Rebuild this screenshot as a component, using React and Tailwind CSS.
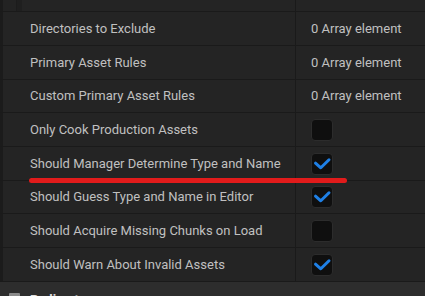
import React from "react";

const rows = [
  { label: "Directories to Exclude", value: "0 Array element", h: "h-[33px]" },
  { label: "Primary Asset Rules", value: "0 Array element", h: "h-[33px]" },
  { label: "Custom Primary Asset Rules", value: "0 Array element", h: "h-[32px]" },
  { label: "Only Cook Production Assets", check: false, h: "h-[33px]" },
  { label: "Should Manager Determine Type and Name", check: true, h: "h-[33px]" },
  { label: "Should Guess Type and Name in Editor", check: true, h: "h-[32px]" },
  { label: "Should Acquire Missing Chunks on Load", check: false, h: "h-[33px]" },
  { label: "Should Warn About Invalid Assets", check: true, h: "h-[33px]" },
];

function Checkbox({ checked }) {
  return (
    <div className="w-[22px] h-[22px] rounded-[4px] bg-[#0f0f0f] border border-[#2c2c2c] flex items-center justify-center">
      {checked && (
        <svg width="22" height="22" viewBox="0 0 22 22" className="-m-px">
          <path d="M4.5 10.2 L9.8 14.8 L18 6.8" fill="none" stroke="#1f80e6" strokeWidth="3" strokeLinecap="round" strokeLinejoin="round" />
        </svg>
      )}
    </div>
  );
}

export default function App() {
  return (
    <div
      className="relative w-[425px] h-[296px] overflow-hidden bg-[#1a1a1a] text-[#c0c0c0] text-[13px]"
      style={{ fontFamily: "Roboto, 'Noto Sans', sans-serif" }}
    >
      <div className="flex flex-col">
        {/* partial top row */}
        <div className="flex h-[11px] border-b border-[#1a1a1a] box-content">
          <div className="w-[3px] bg-[#1b1b1b]" />
          <div className="w-[13px] bg-[#232323]" />
          <div className="w-px bg-[#1c1c1c]" />
          <div className="w-[5px] bg-[#1f1f1f]" />
          <div className="w-[273px] bg-[#242424]" />
          <div className="w-px bg-[#1a1a1a]" />
          <div className="flex-1 bg-[#242424]" />
        </div>
        {rows.map((r) => (
          <div key={r.label} className={`flex ${r.h} border-b border-[#1a1a1a] box-content`}>
            <div className="w-[3px] bg-[#1b1b1b]" />
            <div className="w-[292px] bg-[#242424] flex items-center pl-[27px] whitespace-nowrap">
              {r.label}
            </div>
            <div className="w-px bg-[#1a1a1a]" />
            <div className="flex-1 bg-[#242424] flex items-center pl-[15px] whitespace-nowrap">
              {r.value ? r.value : <Checkbox checked={r.check} />}
            </div>
          </div>
        ))}
        {/* category header */}
        <div className="flex h-[30px] bg-[#2d2d2d] items-start pt-[8px]">
          <div className="ml-[9px] mt-[3px] w-[11px] h-[11px] bg-[#8a8a8a] rounded-[1px]" />
          <div className="ml-[10px] text-[#e0e0e0] font-bold">Redirects</div>
        </div>
      </div>
      <div className="absolute left-[29px] top-[178px] w-[318px] h-[5px] rounded-full bg-[#e11b1b]" />
    </div>
  );
}
